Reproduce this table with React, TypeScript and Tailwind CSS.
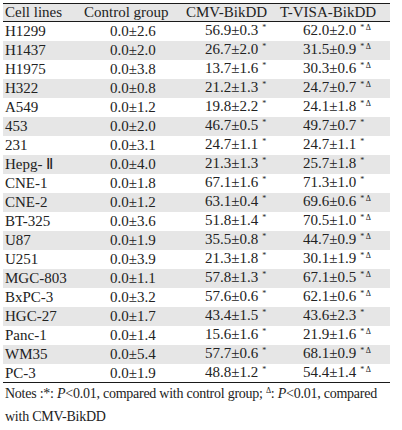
import React from 'react'

const rows: [string, string, string, string, boolean][] = [
  ['H1299', '0.0±2.6', '56.9±0.3', '62.0±2.0', true],
  ['H1437', '0.0±2.0', '26.7±2.0', '31.5±0.9', true],
  ['H1975', '0.0±3.8', '13.7±1.6', '30.3±0.6', true],
  ['H322', '0.0±0.8', '21.2±1.3', '24.7±0.7', true],
  ['A549', '0.0±1.2', '19.8±2.2', '24.1±1.8', true],
  ['453', '0.0±2.0', '46.7±0.5', '49.7±0.7', false],
  ['231', '0.0±3.1', '24.7±1.1', '24.7±1.1', false],
  ['Hepg- Ⅱ', '0.0±4.0', '21.3±1.3', '25.7±1.8', false],
  ['CNE-1', '0.0±1.8', '67.1±1.6', '71.3±1.0', false],
  ['CNE-2', '0.0±1.2', '63.1±0.4', '69.6±0.6', true],
  ['BT-325', '0.0±3.6', '51.8±1.4', '70.5±1.0', true],
  ['U87', '0.0±1.9', '35.5±0.8', '44.7±0.9', true],
  ['U251', '0.0±3.9', '21.3±1.8', '30.1±1.9', true],
  ['MGC-803', '0.0±1.1', '57.8±1.3', '67.1±0.5', true],
  ['BxPC-3', '0.0±3.2', '57.6±0.6', '62.1±0.6', true],
  ['HGC-27', '0.0±1.7', '43.4±1.5', '43.6±2.3', false],
  ['Panc-1', '0.0±1.4', '15.6±1.6', '21.9±1.6', true],
  ['WM35', '0.0±5.4', '57.7±0.6', '68.1±0.9', true],
  ['PC-3', '0.0±1.9', '48.8±1.2', '54.4±1.4', true],
]

function Sup({ text }: { text: string }) {
  return <span className="text-[8px] relative -top-[5px] ml-[4px] align-baseline">{text}</span>
}

export default function App() {
  return (
    <div
      className="w-[402px] h-[430px] bg-white text-[#222] pt-[3px] pl-[3px]"
      style={{ fontFamily: '"Liberation Serif", "Times New Roman", serif' }}
    >
      <div className="w-[387px] text-[15px] leading-[19px]">
        <div className="flex h-[19px] bg-[#e6e6e6] border-t border-b border-[#1a1a1a] items-center">
          <div className="w-[81px] pl-[2px]">Cell lines</div>
          <div className="w-[101px]">Control group</div>
          <div className="w-[94px] pl-[1px]">CMV-BikDD</div>
          <div className="flex-1 pl-[1px] whitespace-nowrap">T-VISA-BikDD</div>
        </div>
        {rows.map(([name, c, cmv, tv, delta], i) => (
          <div
            key={name}
            className={
              'flex h-[19px] items-center whitespace-nowrap ' +
              (i % 2 === 1 ? 'bg-[#e6e6e6] ' : 'bg-white ') +
              (i === rows.length - 1 ? 'border-b border-[#1a1a1a]' : '')
            }
          >
            <div className="w-[81px] pl-[2px]">{name}</div>
            <div className="w-[101px] pl-[26px]">{c}</div>
            <div className="w-[94px] pl-[20px]">
              {cmv}
              <Sup text="*" />
            </div>
            <div className="flex-1 pl-[24px]">
              {tv}
              <Sup text={delta ? '* Δ' : '*'} />
            </div>
          </div>
        ))}
        <div className="pl-[2px] text-[14px] leading-[21px] whitespace-nowrap tracking-[-0.25px]">
          Notes :*: <i>P</i>&lt;0.01, compared with control group; <span className="text-[8px] relative -top-[5px]">Δ</span>: <i>P</i>&lt;0.01, compared
          <br />
          with CMV-BikDD
        </div>
      </div>
    </div>
  )
}
